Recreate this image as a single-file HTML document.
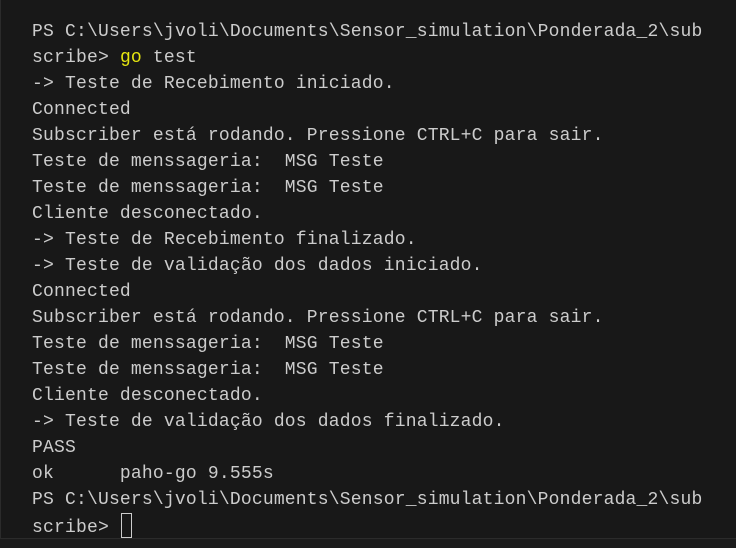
<!DOCTYPE html>
<html><head><meta charset="utf-8"><style>
html,body{margin:0;padding:0;}
body{width:736px;height:548px;background:#181818;overflow:hidden;position:relative;}
.bl{position:absolute;left:0;top:0;width:1px;height:538px;background:#2b2b2b;}
.bb{position:absolute;left:0;top:538px;width:736px;height:1px;background:#2b2b2b;}
.bot{position:absolute;left:0;top:539px;width:736px;height:9px;background:#1c1c1c;}
pre{position:absolute;left:32px;top:19px;margin:0;font-family:"Liberation Mono",monospace;font-size:18px;letter-spacing:0.19px;line-height:26px;color:#cccccc;white-space:pre;}
.y{color:#e5e510;}
.cur{display:inline-block;width:9px;height:23px;border:1px solid #cccccc;vertical-align:-6px;margin-left:1px;}
</style></head><body>
<div class="bl"></div><div class="bb"></div><div class="bot"></div>
<pre>PS C:\Users\jvoli\Documents\Sensor_simulation\Ponderada_2\sub
scribe&gt; <span class="y">go</span> test
-&gt; Teste de Recebimento iniciado.
Connected
Subscriber está rodando. Pressione CTRL+C para sair.
Teste de menssageria:  MSG Teste
Teste de menssageria:  MSG Teste
Cliente desconectado.
-&gt; Teste de Recebimento finalizado.
-&gt; Teste de validação dos dados iniciado.
Connected
Subscriber está rodando. Pressione CTRL+C para sair.
Teste de menssageria:  MSG Teste
Teste de menssageria:  MSG Teste
Cliente desconectado.
-&gt; Teste de validação dos dados finalizado.
PASS
ok      paho-go 9.555s
PS C:\Users\jvoli\Documents\Sensor_simulation\Ponderada_2\sub
scribe&gt; <span class="cur"></span></pre>
</body></html>
